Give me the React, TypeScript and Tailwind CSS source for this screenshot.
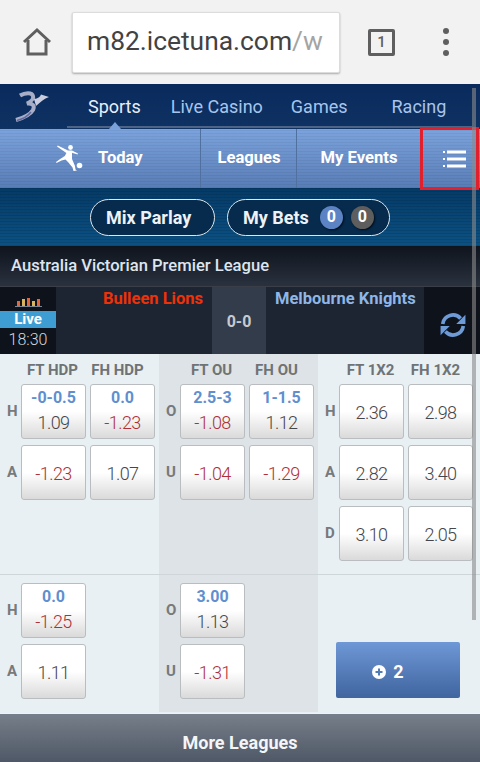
import React from 'react';

const ROBOTO = 'font-[Roboto,sans-serif]';

type Odd = { line?: string; price: string };

function priceColor(v: string) {
  return v.startsWith('-') ? 'text-[#ae2f38]' : 'text-[#45464c]';
}

function OddsCell({ odd }: { odd: Odd }) {
  return (
    <div className="w-[65px] h-[55px] rounded-[3px] border border-[#b9bdbf] bg-gradient-to-b from-white from-50% to-[#dadada] flex flex-col items-center justify-center">
      {odd.line ? (
        <>
          <span className="text-[16px] leading-[20px] -mt-[1px] font-bold text-[#5f8fcf]">{odd.line}</span>
          <span className={`text-[18px] leading-[24px] mt-[3px] font-light tracking-[-0.6px] ${priceColor(odd.price)}`}>{odd.price}</span>
        </>
      ) : (
        <span className={`text-[18px] leading-[24px] pt-[2px] font-light tracking-[-0.6px] ${priceColor(odd.price)}`}>{odd.price}</span>
      )}
    </div>
  );
}

function OddsRow({ label, odds }: { label: string; odds: Odd[] }) {
  return (
    <div className="flex items-center h-[55px]">
      <span className="w-[21px] pl-[7px] text-[15px] font-bold text-[#77797c]">{label}</span>
      <div className="flex gap-[4px]">
        {odds.map((o, i) => (
          <OddsCell key={i} odd={o} />
        ))}
      </div>
    </div>
  );
}

function Heads({ labels }: { labels: string[] }) {
  return (
    <div className="flex h-[30px] pl-[20px] pt-[3px] items-center">
      {labels.map((l) => (
        <span key={l} className="w-[65px] text-center text-[15px] font-bold text-[#6f7376] whitespace-nowrap">
          {l}
        </span>
      ))}
    </div>
  );
}

function Logo() {
  return (
    <svg width="36" height="32" viewBox="0 0 36 32" fill="none">
      <path d="M5 4.5 C10 1.5 17 1 18 5 C19 8 15 11 12 12.5 C18 12 20 15 18 19 C15 24 8 27 1 29" stroke="#a9aec8" strokeWidth="4" />
      <path d="M19 8 C23 7.5 25 6 26 3.5 L34 6 C29 7.5 26 11 21 15 Z" fill="#c9cddd" />
      <path d="M2 29.5 C8 28 13 25 16 21" stroke="#5f689f" strokeWidth="1.5" />
    </svg>
  );
}

function Kicker() {
  return (
    <svg width="28" height="30" viewBox="0 0 28 30" fill="white">
      <circle cx="15.5" cy="4.5" r="2.4" />
      <path d="M13 7.5 L17 7.5 L23 10.5 L22.6 11.4 L17 9.8 L17 16 L20 23 L20.5 26.5 L22 27.6 L18.5 28 L17.5 24.5 L13 19 L10.5 16.5 L6.5 17.5 L1.5 20 L1 19 L5.5 15.8 L9.8 13 L11.4 10 L2 3.5 L2.8 2.5 Z" />
      <circle cx="24.5" cy="22.5" r="2.8" />
    </svg>
  );
}

function MenuIcon() {
  return (
    <svg width="23" height="18" viewBox="0 0 23 18" fill="white">
      <rect x="0" y="1" width="2" height="2" />
      <rect x="4" y="0.5" width="19" height="3" />
      <rect x="0" y="8" width="2" height="2" />
      <rect x="4" y="7.5" width="19" height="3" />
      <rect x="0" y="15" width="2" height="2" />
      <rect x="4" y="14.5" width="19" height="3" />
    </svg>
  );
}

function Badge({ color, children }: { color: string; children: React.ReactNode }) {
  return (
    <span className={`w-[23px] h-[23px] rounded-full ${color} flex items-center justify-center text-[16px] font-bold text-white shadow-[1px_1px_2px_rgba(0,0,0,0.7)]`}>
      {children}
    </span>
  );
}

export default function App() {
  return (
    <div className={`relative w-[480px] h-[762px] overflow-hidden ${ROBOTO}`}>
      {/* Browser chrome */}
      <div className="h-[84px] bg-[#f2f2f2] flex items-center">
        <div className="w-[72px] flex justify-center">
          <svg width="30" height="30" viewBox="0 0 30 30" fill="none" stroke="#5f5f5f" strokeWidth="3" className="ml-[1px]">
            <path d="M2 15 L15 3 L28 15" />
            <path d="M6 13 V27 H24 V13" />
          </svg>
        </div>
        <div className="w-[268px] h-[61px] bg-white rounded-[2px] border border-[#dcdcdc] shadow-[0_1px_2px_rgba(0,0,0,0.3)] flex items-center pl-[14px] text-[26.4px] whitespace-nowrap overflow-hidden">
          <span className="text-[#424242]">m82.icetuna.com</span>
          <span className="text-[#a4a4a4]">/w</span>
        </div>
        <div className="ml-[28px] w-[27px] h-[27px] border-[3px] border-[#5f5f5f] rounded-[2px] flex items-center justify-center text-[15px] font-medium text-[#5f5f5f]">
          1
        </div>
        <div className="ml-[48px] flex flex-col gap-[5px]">
          <span className="w-[6px] h-[6px] rounded-full bg-[#5f5f5f]" />
          <span className="w-[6px] h-[6px] rounded-full bg-[#5f5f5f]" />
          <span className="w-[6px] h-[6px] rounded-full bg-[#5f5f5f]" />
        </div>
      </div>

      {/* Main nav */}
      <div className="relative h-[45px] bg-gradient-to-b from-[#0a2a5c] to-[#0e3263] flex items-center text-[18px] whitespace-nowrap">
        <div className="w-[88px] pl-[15px] pt-[1px]">
          <Logo />
        </div>
        <span className="text-[#e9eef7]">Sports</span>
        <span className="ml-[30px] text-[#a7c5ec]">Live Casino</span>
        <span className="ml-[28px] text-[#a7c5ec]">Games</span>
        <span className="ml-[44px] text-[#a7c5ec]">Racing</span>
        <div className="absolute left-[67px] right-[8px] bottom-[1px] h-[2px] bg-[#4d6486]" />
        <div className="absolute left-[109px] bottom-0 w-0 h-0 border-l-[6px] border-r-[6px] border-b-[7px] border-l-transparent border-r-transparent border-b-[#7ba1db]" />
      </div>

      {/* Sub nav */}
      <div className="h-[59px] bg-[repeating-linear-gradient(0deg,rgba(0,0,0,0.05)_0px,rgba(0,0,0,0.05)_1px,transparent_1px,transparent_3px),linear-gradient(to_bottom,#7ca3dd,#587cb6)] flex items-center text-[16.6px] font-bold text-white whitespace-nowrap">
        <div className="w-[201px] h-full flex items-center pl-[55px] pb-[1px] border-r border-[#50719f]">
          <Kicker />
          <span className="ml-[15px]">Today</span>
        </div>
        <div className="w-[96px] h-full flex items-center justify-center pb-[1px] pl-[1px] border-r border-[#50719f]">Leagues</div>
        <div className="w-[123px] h-full flex items-center justify-center pb-[1px] pl-[1px]">My Events</div>
        <div className="w-[60px] h-full flex items-center pl-[23px]">
          <MenuIcon />
        </div>
      </div>

      {/* Bet buttons */}
      <div className="h-[58px] bg-[repeating-linear-gradient(0deg,rgba(0,0,0,0.1)_0px,rgba(0,0,0,0.1)_1px,transparent_1px,transparent_3px),linear-gradient(to_bottom,#053a66,#0b5183)] flex items-center pl-[90px] gap-[12px] text-[18px] font-bold text-[#eef2f7] whitespace-nowrap">
        <div className="w-[125px] h-[37px] rounded-full border-[1.5px] border-[#dfe8ef] bg-[#062b4d] flex items-center pl-[15px]">Mix Parlay</div>
        <div className="w-[163px] h-[37px] rounded-full border-[1.5px] border-[#dfe8ef] bg-[#062b4d] flex items-center pl-[15px]">
          My Bets
          <span className="ml-[11px] flex gap-[8px]">
            <Badge color="bg-[#5c84c4]">0</Badge>
            <Badge color="bg-[#5e5e5e]">0</Badge>
          </span>
        </div>
      </div>

      {/* League title */}
      <div className="h-[41px] bg-gradient-to-b from-[#0f141d] to-[#2a323f] border-b border-[#3a3f47] flex items-center pl-[11px] text-[16.6px] font-medium text-[#dfe5ee] whitespace-nowrap">
        Australia Victorian Premier League
      </div>

      {/* Match row */}
      <div className="h-[67px] bg-[#1c2531] flex font-bold text-[16.5px] whitespace-nowrap">
        <div className="w-[56px] bg-[#0e131b] flex flex-col items-center">
          <div className="h-[24px] w-full flex justify-center items-end pb-[4px]">
            <div className="w-[27px] border-b border-[#7a8596] flex justify-center items-end gap-[2px] h-[9px]">
              <span className="w-[3px] h-[5px] bg-[#e2683c]" />
              <span className="w-[3px] h-[7px] bg-[#d9b45a]" />
              <span className="w-[3px] h-[8px] bg-[#e2683c]" />
              <span className="w-[3px] h-[5px] bg-[#d9b45a]" />
              <span className="w-[3px] h-[7px] bg-[#e2683c]" />
            </div>
          </div>
          <div className="w-full h-[17px] bg-[#3e9dd3] text-white text-[15px] leading-[17px] text-center">Live</div>
          <div className="text-[#d5d8dc] font-light text-[16px] leading-[24px]">18:30</div>
        </div>
        <div className="w-[156px] flex justify-end pr-[9px] text-[#ee3208] leading-[24px]">Bulleen Lions</div>
        <div className="w-[54px] bg-[#333c4b] flex items-center justify-center pt-[3px] text-[#c7cbd1] text-[16px]">0-0</div>
        <div className="w-[158px] pl-[9px] text-[#8fb6e6] leading-[24px]">Melbourne Knights</div>
        <div className="flex-1 bg-[#0e131b] flex items-center pl-[16px] pt-[9px]">
          <svg width="26" height="26" viewBox="0 0 24 24" fill="none" stroke="#6e9ad6" strokeWidth="3.4">
            <path d="M2.5 11 A9.5 9.5 0 0 1 19 6" />
            <path d="M21.5 13 A9.5 9.5 0 0 1 5 18" />
            <path d="M23.5 2.5 V11 H15 Z" fill="#6e9ad6" stroke="none" />
            <path d="M0.5 21.5 V13 H9 Z" fill="#6e9ad6" stroke="none" />
          </svg>
        </div>
      </div>

      {/* Odds */}
      <div className="bg-[#e8f0f4] text-[#55565c]">
        <div className="flex h-[221px] border-b border-[#cfd6da]">
          <div className="w-[159px]">
            <Heads labels={['FT HDP', 'FH HDP']} />
            <div className="flex flex-col gap-[6px]">
              <OddsRow label="H" odds={[{ line: '-0-0.5', price: '1.09' }, { line: '0.0', price: '-1.23' }]} />
              <OddsRow label="A" odds={[{ price: '-1.23' }, { price: '1.07' }]} />
            </div>
          </div>
          <div className="w-[159px] bg-[#dde3e6]">
            <Heads labels={['FT OU', 'FH OU']} />
            <div className="flex flex-col gap-[6px]">
              <OddsRow label="O" odds={[{ line: '2.5-3', price: '-1.08' }, { line: '1-1.5', price: '1.12' }]} />
              <OddsRow label="U" odds={[{ price: '-1.04' }, { price: '-1.29' }]} />
            </div>
          </div>
          <div className="w-[162px]">
            <Heads labels={['FT 1X2', 'FH 1X2']} />
            <div className="flex flex-col gap-[6px]">
              <OddsRow label="H" odds={[{ price: '2.36' }, { price: '2.98' }]} />
              <OddsRow label="A" odds={[{ price: '2.82' }, { price: '3.40' }]} />
              <OddsRow label="D" odds={[{ price: '3.10' }, { price: '2.05' }]} />
            </div>
          </div>
        </div>
        <div className="flex h-[139px] pb-[1px] border-b border-[#f2f2f2]">
          <div className="w-[159px] pt-[8px] flex flex-col gap-[6px]">
            <OddsRow label="H" odds={[{ line: '0.0', price: '-1.25' }]} />
            <OddsRow label="A" odds={[{ price: '1.11' }]} />
          </div>
          <div className="w-[159px] pt-[8px] bg-[#dde3e6] flex flex-col gap-[6px]">
            <OddsRow label="O" odds={[{ line: '3.00', price: '1.13' }]} />
            <OddsRow label="U" odds={[{ price: '-1.31' }]} />
          </div>
          <div className="w-[162px] pl-[18px] pt-[67px]">
            <div className="w-[124px] h-[56px] rounded-[2px] bg-gradient-to-b from-[#6e98d6] to-[#40659f] flex items-center justify-center gap-[7px] pr-[20px] pt-[3px] text-white text-[18px] font-bold">
              <svg width="14" height="14" viewBox="0 0 14 14">
                <circle cx="7" cy="7" r="7" fill="white" />
                <path d="M7 3.5 V10.5 M3.5 7 H10.5" stroke="#527bb8" strokeWidth="2" />
              </svg>
              2
            </div>
          </div>
        </div>
      </div>

      {/* Footer */}
      <div className="h-[48px] pt-[9px] bg-gradient-to-b from-[#777f8a] to-[#4f5866] flex items-center justify-center text-[18px] font-bold text-[#f4f5f7]">
        More Leagues
      </div>

      {/* Overlays: highlight box and scrollbar */}
      <div className="absolute left-[420px] top-[127px] w-[59px] h-[63px] border-[3px] border-[#e0202c]" />
      <div className="absolute left-[472px] top-[88px] w-[4px] h-[532px] bg-[#8a8a8a]/60" />
    </div>
  );
}
